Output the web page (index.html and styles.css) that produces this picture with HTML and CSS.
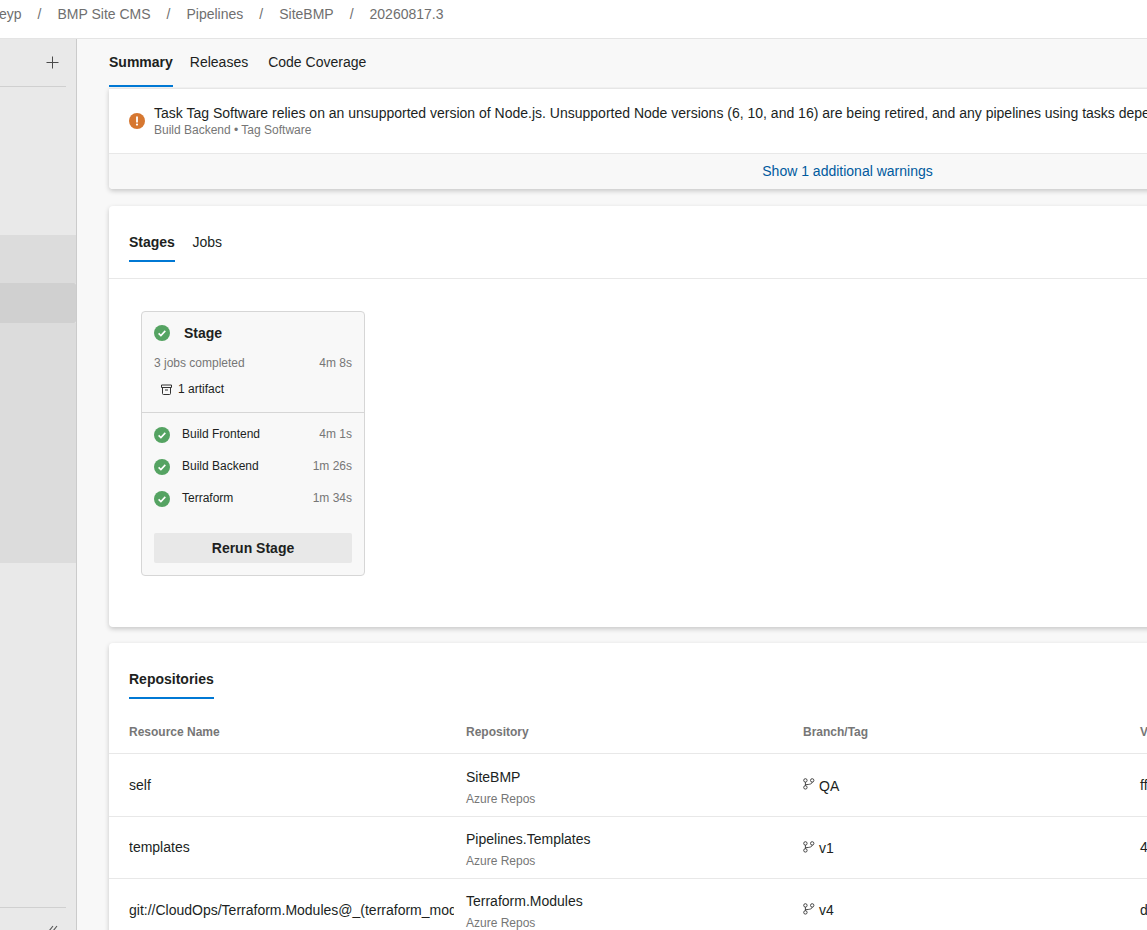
FILE: index.html
```html
<!DOCTYPE html>
<html lang="en">

<head>
    <title>20260817.3 - Summary</title>
    <meta charset="UTF-8">
    <link rel="stylesheet" href="styles.css">
</head>

<body>
    <svg class="defs" width="0" height="0">
        <symbol id="ok" viewBox="0 0 16 16">
            <circle cx="8" cy="8" r="8" fill="#55a362"></circle>
            <path d="M4.6 8.3l2.3 2.2 4.4-4.6" fill="none" stroke="#fff" stroke-width="1.6"></path>
        </symbol>
        <symbol id="branch" viewBox="0 0 12 12">
            <g fill="none" stroke="#333" stroke-width="0.9">
                <circle cx="2.4" cy="2.4" r="1.7"></circle>
                <circle cx="9.2" cy="2.4" r="1.7"></circle>
                <circle cx="2.4" cy="9.4" r="1.7"></circle>
                <path d="M2.4 4.1v3.6M9.2 4.1c0 1.8-2.4 2.4-6.8 2.6"></path>
            </g>
        </symbol>
    </svg>

    <header class="crumbs">
        <span class="crumb">eyp</span>
        <span class="sep">/</span>
        <span class="crumb">BMP Site CMS</span>
        <span class="sep">/</span>
        <span class="crumb">Pipelines</span>
        <span class="sep">/</span>
        <span class="crumb">SiteBMP</span>
        <span class="sep">/</span>
        <span class="crumb">20260817.3</span>
    </header>

    <div class="layout">
        <aside class="sidebar">
            <div class="side-top">
                <svg class="plus" width="14" height="14" viewBox="0 0 14 14">
                    <path d="M7.5 1.5v12M1.5 7.5h12" stroke="#4a4a4a" stroke-width="1"></path>
                </svg>
            </div>
            <div class="side-group">
                <div class="side-item"></div>
                <div class="side-item active"></div>
                <div class="side-rest"></div>
            </div>
            <div class="side-bottom">
                <svg class="collapse" width="10" height="12" viewBox="0 0 10 12">
                    <path d="M5 1L1 6l4 5M9 1L5 6l4 5" fill="none" stroke="#555" stroke-width="1.1"></path>
                </svg>
            </div>
        </aside>

        <main class="main">
            <nav class="page-tabs">
                <a class="tab on summary-tab">Summary</a>
                <a class="tab">Releases</a>
                <a class="tab">Code Coverage</a>
            </nav>

            <section class="card notice">
                <div class="notice-body">
                    <svg class="warn" width="16" height="16" viewBox="0 0 16 16">
                        <circle cx="8" cy="8" r="8" fill="#d67730"></circle>
                        <path d="M8 3.4v6" stroke="#fff" stroke-width="1.8"></path>
                        <circle cx="8" cy="11.6" r="1.1" fill="#fff"></circle>
                    </svg>
                    <div>
                        <div class="notice-text">Task Tag Software relies on an unsupported version of Node.js. Unsupported Node versions (6, 10, and 16) are being retired, and any pipelines using tasks depending on them should be updated.</div>
                        <div class="muted notice-sub">Build Backend • Tag Software</div>
                    </div>
                </div>
                <div class="notice-foot"><a class="link">Show 1 additional warnings</a></div>
            </section>

            <section class="card stages">
                <div class="card-tabs">
                    <a class="tab on stages-tab">Stages</a>
                    <a class="tab">Jobs</a>
                </div>
                <div class="stage-area">
                    <div class="stage">
                        <div class="stage-head">
                            <div class="stage-title">
                                <svg class="status"><use href="#ok"></use></svg>
                                <span>Stage</span>
                            </div>
                            <div class="row-between muted stage-meta">
                                <span>3 jobs completed</span>
                                <span>4m 8s</span>
                            </div>
                            <div class="artifact">
                                <svg width="11" height="11" viewBox="0 0 11 11">
                                    <path d="M.5 1h10v2.5H.5zM1.5 3.5v6a1 1 0 0 0 1 1h6a1 1 0 0 0 1-1v-6M4 6h3" fill="none" stroke="#333"></path>
                                </svg>
                                <span>1 artifact</span>
                            </div>
                        </div>
                        <div class="stage-jobs">
                            <div class="job">
                                <svg class="status"><use href="#ok"></use></svg>
                                <span class="job-name">Build Frontend</span>
                                <span class="muted">4m 1s</span>
                            </div>
                            <div class="job">
                                <svg class="status"><use href="#ok"></use></svg>
                                <span class="job-name">Build Backend</span>
                                <span class="muted">1m 26s</span>
                            </div>
                            <div class="job">
                                <svg class="status"><use href="#ok"></use></svg>
                                <span class="job-name">Terraform</span>
                                <span class="muted">1m 34s</span>
                            </div>
                            <button class="rerun">Rerun Stage</button>
                        </div>
                    </div>
                </div>
            </section>

            <section class="card repos">
                <div class="repos-head"><span class="tab on repos-tab">Repositories</span></div>
                <div class="grid-row grid-head">
                    <div>Resource Name</div>
                    <div>Repository</div>
                    <div>Branch/Tag</div>
                    <div>Version</div>
                </div>
                <div class="grid-row">
                    <div class="cut">self</div>
                    <div class="repo">
                        <div>SiteBMP</div>
                        <div class="muted sub">Azure Repos</div>
                    </div>
                    <div class="ref"><svg class="branch"><use href="#branch"></use></svg>QA</div>
                    <div>ffa41c2</div>
                </div>
                <div class="grid-row">
                    <div class="cut">templates</div>
                    <div class="repo">
                        <div>Pipelines.Templates</div>
                        <div class="muted sub">Azure Repos</div>
                    </div>
                    <div class="ref"><svg class="branch"><use href="#branch"></use></svg>v1</div>
                    <div>4be07d9</div>
                </div>
                <div class="grid-row">
                    <div class="cut">git://CloudOps/Terraform.Modules@_(terraform_modules)</div>
                    <div class="repo">
                        <div>Terraform.Modules</div>
                        <div class="muted sub">Azure Repos</div>
                    </div>
                    <div class="ref"><svg class="branch"><use href="#branch"></use></svg>v4</div>
                    <div>d13f8a6</div>
                </div>
            </section>
        </main>
    </div>
</body>

</html>
```

FILE: styles.css
```css
html,
body {
    margin: 0;
    height: 100%;
    overflow: hidden;
}
body {
    display: flex;
    flex-direction: column;
    font-family: "Liberation Sans", Arial, sans-serif;
    font-size: 14px;
    color: #201f1e;
    background-color: #f8f8f8;
}
.defs {
    position: absolute;
}
.crumbs {
    display: flex;
    flex: none;
    align-items: center;
    gap: 16px;
    height: 28px;
    padding-bottom: 10px;
    margin-left: -1px;
    background-color: #fff;
    border-bottom: 1px solid #e4e4e4;
    color: #6f6f6f;
}
.layout {
    display: flex;
    flex: 1;
    min-height: 0;
}

.sidebar {
    display: flex;
    flex: none;
    flex-direction: column;
    width: 76px;
    background-color: #e9e9e9;
    border-right: 1px solid #cbcbcb;
}
.side-top {
    display: flex;
    flex: none;
    justify-content: flex-end;
    align-items: center;
    box-sizing: border-box;
    width: 66px;
    height: 48px;
    padding: 0 7px 2px 0;
    border-bottom: 1px solid #d0d0d0;
}
.side-group {
    flex: 1;
    padding-top: 148px;
}
.side-item {
    height: 48px;
    background-color: #dcdcdc;
}
.side-item.active {
    height: 40px;
    background-color: #d0d0d0;
    border-radius: 0 2px 2px 0;
}
.side-rest {
    height: 240px;
    background-color: #dcdcdc;
}
.side-bottom {
    flex: none;
    box-sizing: border-box;
    width: 66px;
    height: 23px;
    padding: 17px 0 0 48px;
    overflow: hidden;
    border-top: 1px solid #d0d0d0;
}
.collapse {
    display: block;
}

.main {
    flex: 1;
    min-width: 0;
    overflow: hidden;
    padding-left: 32px;
}
.page-tabs {
    position: relative;
    z-index: 1;
    display: flex;
    height: 48px;
    background-color: #f8f8f8;
}
.tab {
    display: flex;
    align-items: center;
    box-sizing: border-box;
    margin-right: 20px;
    border-bottom: 2px solid transparent;
}
.tab.on {
    font-weight: bold;
    border-bottom-color: #0078d4;
}
.summary-tab {
    margin-right: 17px;
}
.stages-tab {
    margin-right: 17.5px;
}

.card {
    width: 1477px;
    margin-bottom: 16px;
    background-color: #fff;
    border-radius: 4px;
    box-shadow: 0 2px 5px rgba(0, 0, 0, 0.2);
}
.notice {
    margin-top: 1px;
    margin-bottom: 17px;
    border-top: 1px solid #e6e6e6;
    border-radius: 0 0 4px 4px;
}
.notice-body {
    display: flex;
    align-items: flex-start;
    gap: 9px;
    height: 65px;
    box-sizing: border-box;
    padding: 16px 20px 0;
    border-bottom: 1px solid #e8e8e8;
}
.warn {
    flex: none;
    margin-top: 8px;
}
.notice-text {
    line-height: 17px;
    white-space: nowrap;
}
.muted {
    font-size: 12px;
    color: #767676;
}
.notice-sub {
    margin-top: 1px;
}
.notice-foot {
    height: 35px;
    line-height: 35px;
    text-align: center;
    background-color: #f8f8f8;
    border-radius: 0 0 4px 4px;
}
.link {
    color: #005a9e;
}

.card-tabs {
    display: flex;
    height: 73px;
    box-sizing: border-box;
    padding: 16px 20px;
    border-bottom: 1px solid #e8e8e8;
}
.card-tabs .tab {
    height: 40px;
    padding-top: 2px;
}
.stage-area {
    height: 348px;
    box-sizing: border-box;
    padding: 32px;
}
.stage {
    box-sizing: border-box;
    width: 224px;
    height: 265px;
    background-color: #f8f8f8;
    border: 1px solid #d6d6d6;
    border-radius: 4px;
}
.stage-head {
    box-sizing: border-box;
    height: 101px;
    padding: 13px 12px 0;
    border-bottom: 1px solid #d6d6d6;
}
.stage-title {
    display: flex;
    align-items: center;
    gap: 14px;
    height: 16px;
    font-weight: bold;
}
.status {
    flex: none;
    width: 16px;
    height: 16px;
}
.row-between {
    display: flex;
    justify-content: space-between;
}
.stage-meta {
    margin-top: 15px;
    line-height: 14px;
}
.artifact {
    display: flex;
    align-items: center;
    gap: 6px;
    margin-top: 12px;
    padding-left: 7px;
    font-size: 12px;
    line-height: 14px;
}
.stage-jobs {
    padding: 5px 12px 0;
}
.job {
    display: flex;
    align-items: center;
    height: 32px;
    font-size: 12px;
}
.job .status {
    margin-top: 2px;
}
.job-name {
    flex: 1;
    margin-left: 12px;
}
.rerun {
    display: block;
    width: 100%;
    height: 30px;
    margin-top: 19px;
    padding: 0;
    border: none;
    border-radius: 2px;
    background-color: #e8e8e8;
    color: #201f1e;
    font: bold 14px "Liberation Sans", Arial, sans-serif;
}

.repos-head {
    display: flex;
    height: 56px;
    padding: 0 20px;
}
.repos-tab {
    margin-right: 0;
    padding-top: 18px;
    height: 56px;
}
.grid-row {
    display: grid;
    grid-template-columns: repeat(4, 337px);
    align-items: center;
    height: 61.3px;
    padding-left: 20px;
    border-bottom: 1px solid #e8e8e8;
}
.grid-row > div {
    min-width: 0;
}
.grid-head {
    height: 55.4px;
    font-size: 12px;
    font-weight: bold;
    color: #767676;
    box-sizing: border-box;
    padding-top: 12px;
}
.cut {
    margin-right: 12px;
    overflow: hidden;
    white-space: nowrap;
}
.repo {
    padding-top: 4px;
}
.sub {
    margin-top: 7px;
}
.ref {
    display: flex;
    align-items: center;
    padding-top: 1.6px;
}
.branch {
    flex: none;
    width: 12px;
    height: 12px;
    margin: -3px 4px 0 0;
}
```
